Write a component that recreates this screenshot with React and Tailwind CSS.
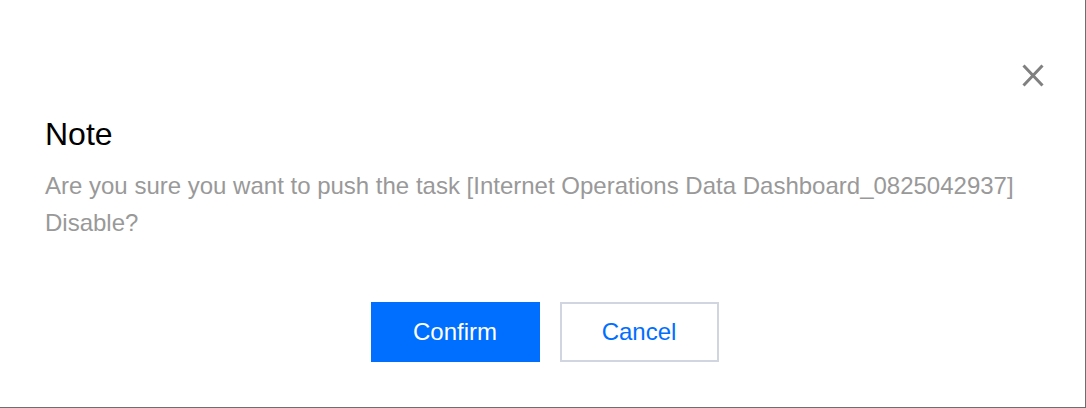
export default function App() {
  return (
    <div className="w-[1086px] h-[408px] bg-white border-r border-b border-[#6e6e6e] font-['Liberation_Sans',Arial,sans-serif] flex flex-col">
      <div className="flex justify-end pt-[64px] pr-[41px]">
        <button className="w-[22px] h-[23px] text-[#808080]">
          <svg viewBox="0 0 22 23" className="w-[22px] h-[23px]" fill="none" stroke="currentColor" strokeWidth="3">
            <path d="M1.5 1.5 L20.5 21.5 M20.5 1.5 L1.5 21.5" />
          </svg>
        </button>
      </div>
      <div className="px-[45px] mt-[27px]">
        <h2 className="text-[32px] leading-[40px] text-black">Note</h2>
        <p className="mt-[13px] text-[24px] leading-[37px] text-[#999999]">
          Are you sure you want to push the task [Internet Operations Data Dashboard_0825042937]
          <br />
          Disable?
        </p>
      </div>
      <div className="flex justify-center gap-[20px] mt-[61px] pl-[4px]">
        <button className="w-[169px] h-[60px] bg-[#006eff] text-white text-[24px]">Confirm</button>
        <button className="w-[159px] h-[60px] border-2 border-[#d1d5df] text-[#006eff] text-[24px] bg-white">Cancel</button>
      </div>
    </div>
  )
}
